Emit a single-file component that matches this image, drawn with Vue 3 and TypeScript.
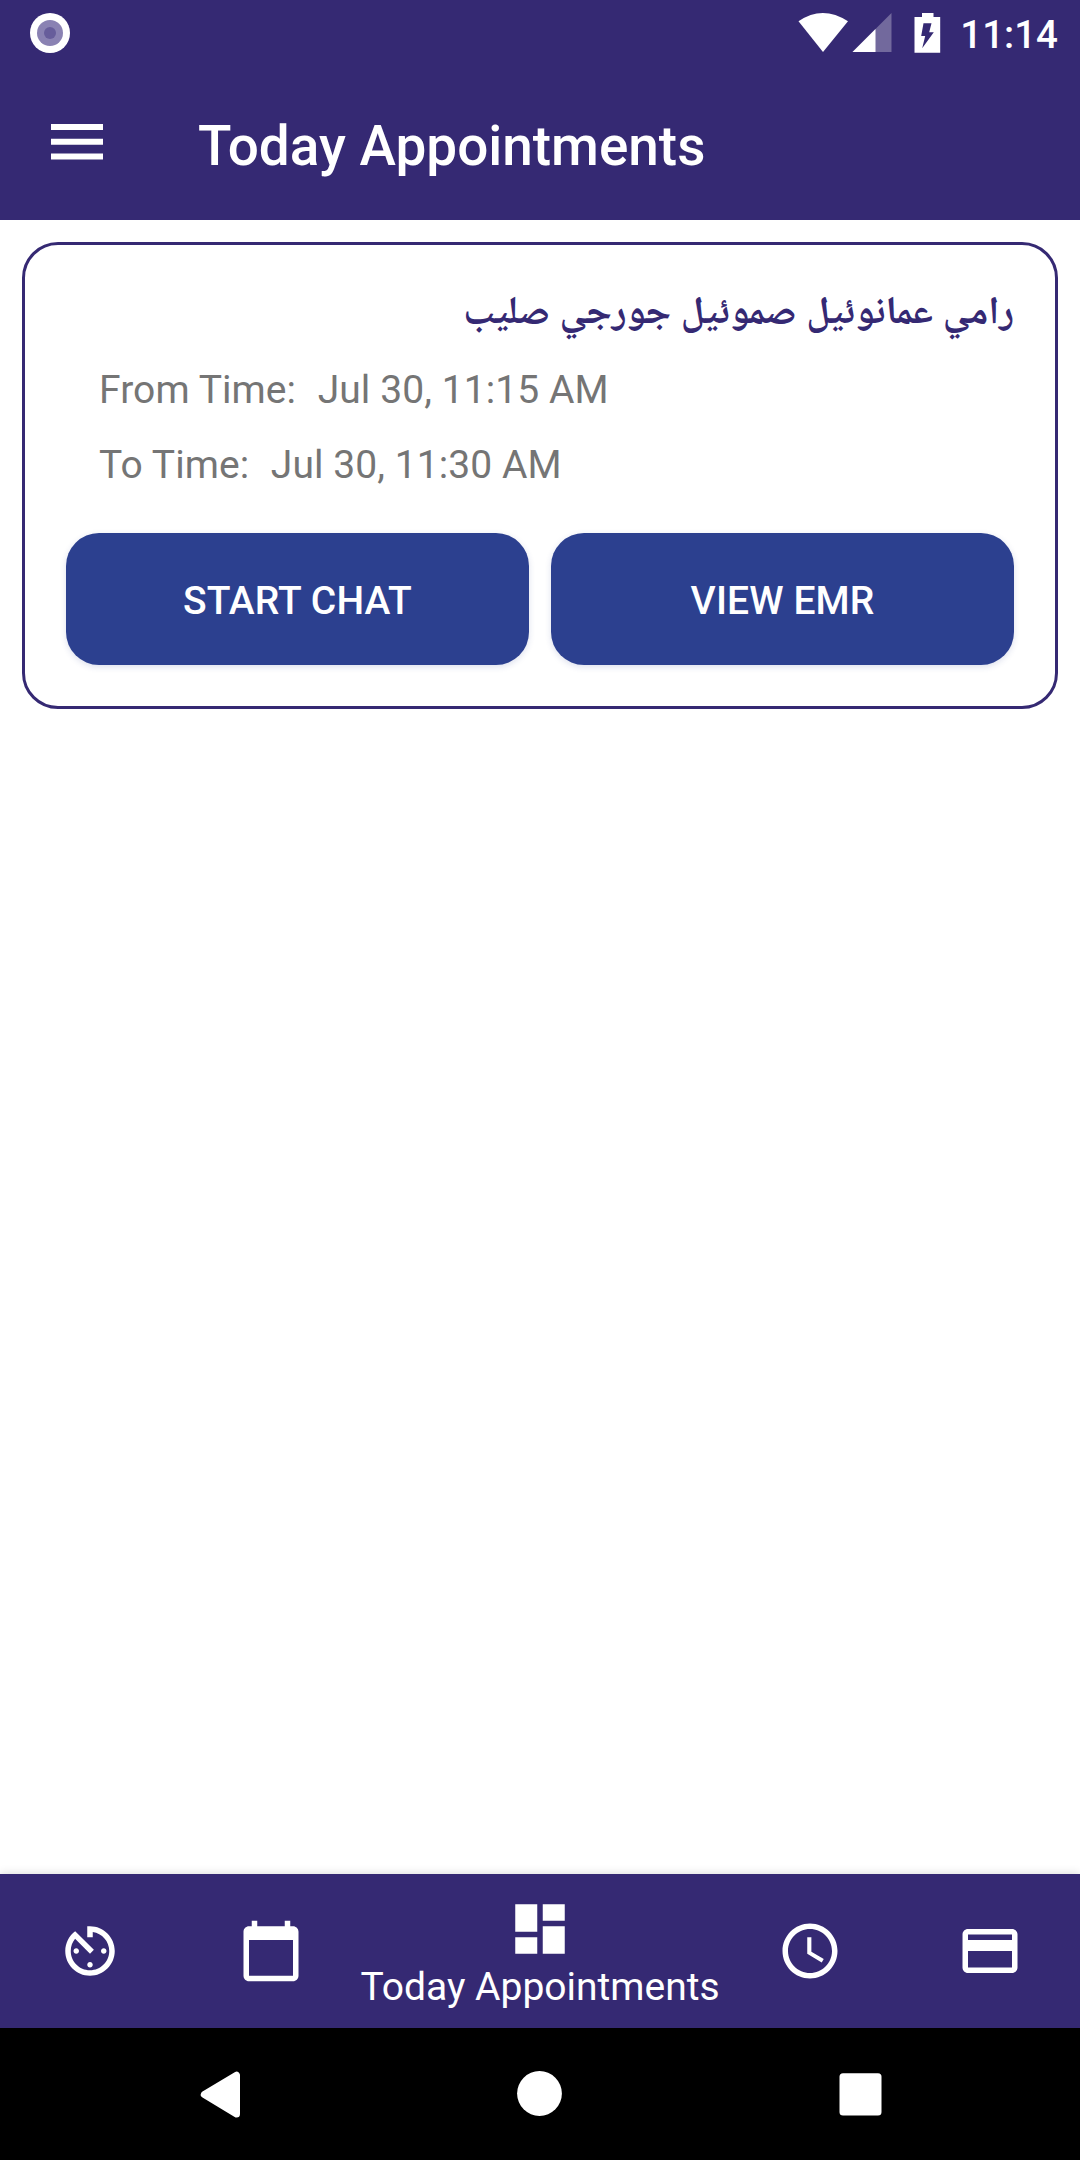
<script setup lang="ts">
interface Tab {
  id: string
  label: string
  path: string
}

const appointment = {
  patient: 'رامي عمانوئيل صموئيل جورجي صليب',
  from: 'Jul 30, 11:15 AM',
  to: 'Jul 30, 11:30 AM',
}

const active = 'today'

const tabs: Tab[] = [
  {
    id: 'timer',
    label: 'Upcoming',
    path: 'M11 17c0 .55.45 1 1 1s1-.45 1-1-.45-1-1-1-1 .45-1 1zm0-14v4h2V5.08c3.39.49 6 3.39 6 6.92 0 3.87-3.13 7-7 7s-7-3.13-7-7c0-1.68.59-3.22 1.58-4.42L12 13l1.41-1.41-6.8-6.8v.02C4.42 6.45 3 9.05 3 12c0 4.97 4.02 9 9 9 4.97 0 9-4.03 9-9s-4.03-9-9-9h-1zm7 9c0-.55-.45-1-1-1s-1 .45-1 1 .45 1 1 1 1-.45 1-1zM6 12c0 .55.45 1 1 1s1-.45 1-1-.45-1-1-1-1 .45-1 1z',
  },
  {
    id: 'calendar',
    label: 'Calendar',
    path: 'M20 3h-1V1h-2v2H7V1H5v2H4c-1.1 0-2 .9-2 2v16c0 1.1.9 2 2 2h16c1.1 0 2-.9 2-2V5c0-1.1-.9-2-2-2zm0 18H4V8h16v13z',
  },
  {
    id: 'today',
    label: 'Today Appointments',
    path: 'M3 13h8V3H3v10zm0 8h8v-6H3v6zm10 0h8V11h-8v10zm0-18v6h8V3h-8z',
  },
  {
    id: 'history',
    label: 'History',
    path: 'M11.99 2C6.47 2 2 6.48 2 12s4.47 10 9.99 10C17.52 22 22 17.52 22 12S17.52 2 11.99 2zM12 20c-4.42 0-8-3.58-8-8s3.58-8 8-8 8 3.58 8 8-3.58 8-8 8zM12.5 7H11v6l5.25 3.15.75-1.23-4.5-2.67z',
  },
  {
    id: 'payments',
    label: 'Payments',
    path: 'M20 4H4c-1.11 0-1.99.89-1.99 2L2 18c0 1.11.89 2 2 2h16c1.11 0 2-.89 2-2V6c0-1.11-.89-2-2-2zm0 14H4v-6h16v6zm0-10H4V6h16v2z',
  },
]
</script>

<template>
  <div class="screen">
    <header class="top">
      <div class="status">
        <svg class="camera" width="40" height="40" viewBox="0 0 40 40">
          <circle cx="20" cy="20" r="20" fill="#fff" />
          <circle cx="20" cy="20" r="13" fill="#8a82b3" />
          <circle cx="20" cy="20" r="6" fill="#675d9b" />
        </svg>
        <svg class="signals" width="144" height="42" viewBox="0 0 144 42">
          <path d="M0.5 9.3Q24.5 -7.3 50 9.3L25 40Z" fill="#fff" />
          <path d="M54.500 40L93.500 1V40Z" fill="#fff" fill-opacity=".3" />
          <path d="M54.500 40L77.500 17V40Z" fill="#fff" />
          <path
            d="M124 1h11.500v4h6.700v35.700h-25.700V5h7.500zM125.500 11.300L123.200 24h4l-3 12.300L135.800 20.300h-4.600l2.300-9z"
            fill="#fff"
            fill-rule="evenodd"
          />
        </svg>
        <span class="clock">11:14</span>
      </div>
      <div class="toolbar">
        <svg class="menu" width="52" height="36" viewBox="0 0 52 36">
          <path d="M0 0h52v6H0zM0 14.700h52v6H0zM0 29.400h52v6H0z" fill="#fff" />
        </svg>
        <h1 class="title">Today Appointments</h1>
      </div>
    </header>

    <main class="content">
      <article class="card">
        <h2 class="patient" dir="rtl" lang="ar">{{ appointment.patient }}</h2>
        <p class="time">From Time:&nbsp; <span class="date">{{ appointment.from }}</span></p>
        <p class="time">To Time:&nbsp; <span class="date">{{ appointment.to }}</span></p>
        <div class="actions">
          <button class="action">START CHAT</button>
          <button class="action">VIEW EMR</button>
        </div>
      </article>
    </main>

    <nav class="tabs">
      <div v-for="tab in tabs" :key="tab.id" class="tab" :class="[tab.id, { active: tab.id === active }]">
        <svg width="66" height="66" viewBox="0 0 24 24"><path :d="tab.path" fill="#fff" /></svg>
        <span v-if="tab.id === active" class="label">{{ tab.label }}</span>
      </div>
    </nav>

    <footer class="system">
      <svg width="1080" height="132" viewBox="0 0 1080 132">
        <path
          d="M204.300 66.500L236.500 47.200V86Z"
          fill="#fff"
          stroke="#fff"
          stroke-width="7"
          stroke-linejoin="round"
        />
        <circle cx="539.500" cy="65.500" r="22.400" fill="#fff" />
        <rect x="839.500" y="45.300" width="42" height="42.300" rx="3.500" fill="#fff" />
      </svg>
    </footer>
  </div>
</template>

<style>
body {
  margin: 0;
}
</style>

<style scoped>
.screen {
  display: flex;
  flex-direction: column;
  width: 1080px;
  height: 2160px;
  overflow: hidden;
  background: #fff;
  font-family: Roboto, sans-serif;
}

.top {
  height: 220px;
  background: #352973;
  color: #fff;
}

.status {
  display: flex;
  align-items: center;
  height: 66px;
  padding: 0 22px 0 30px;
  box-sizing: border-box;
}

.signals {
  margin-left: auto;
}

.clock {
  margin-left: 18px;
  font-size: 38.5px;
  font-weight: 500;
  line-height: 45px;
  padding-top: 3px;
}

.toolbar {
  display: flex;
  align-items: center;
  height: 154px;
  padding-left: 51px;
  box-sizing: border-box;
}

.menu {
  margin-bottom: 3px;
}

.title {
  margin: 6px 0 0 95px;
  font-size: 54.9px;
  font-weight: 500;
  line-height: 64px;
}

.content {
  flex: 1;
  padding: 22px;
}

.card {
  height: 467px;
  padding: 41px;
  border: 3px solid #352973;
  border-radius: 36px;
  box-sizing: border-box;
}

.patient {
  height: 49px;
  margin: 0;
  padding-top: 4px;
  color: #352973;
  font-family: Roboto, 'Noto Naskh Arabic UI', 'Noto Naskh Arabic', 'DejaVu Sans', sans-serif;
  font-size: 39.1px;
  font-weight: 700;
  line-height: 52px;
  white-space: nowrap;
}

.time {
  height: 45px;
  margin: 30px 0 0 33px;
  color: #757575;
  font-size: 39px;
  letter-spacing: 0.08px;
  line-height: 45px;
}

.patient + .time {
  margin-top: 29px;
}

.date {
  margin-left: 2px;
}

.actions {
  display: flex;
  gap: 22px;
  margin-top: 45px;
}

.action {
  flex: 1;
  height: 132px;
  padding: 4px 0 0;
  border: 0;
  border-radius: 33px;
  background: #2c408f;
  box-shadow: 0 2px 6px rgba(44, 64, 143, 0.16);
  color: #fff;
  font-family: inherit;
  font-size: 39px;
  font-weight: 500;
  letter-spacing: 0.1px;
}

.tabs {
  display: flex;
  height: 154px;
  background: #352973;
  box-shadow: 0 0 9px rgba(0, 0, 0, 0.16);
}

.tab {
  display: flex;
  flex: 0 0 180px;
  flex-direction: column;
  align-items: center;
  padding-top: 44px;
  box-sizing: border-box;
}

.tab.calendar {
  padding-left: 2px;
}

.tab svg {
  display: block;
  flex: none;
}

.tab.active {
  flex-basis: 360px;
  padding-top: 22px;
}

.label {
  margin-top: 3px;
  color: #fff;
  font-size: 39px;
  line-height: 45px;
  white-space: nowrap;
}

.system {
  height: 132px;
  background: #000;
}

.system svg {
  display: block;
}
</style>
